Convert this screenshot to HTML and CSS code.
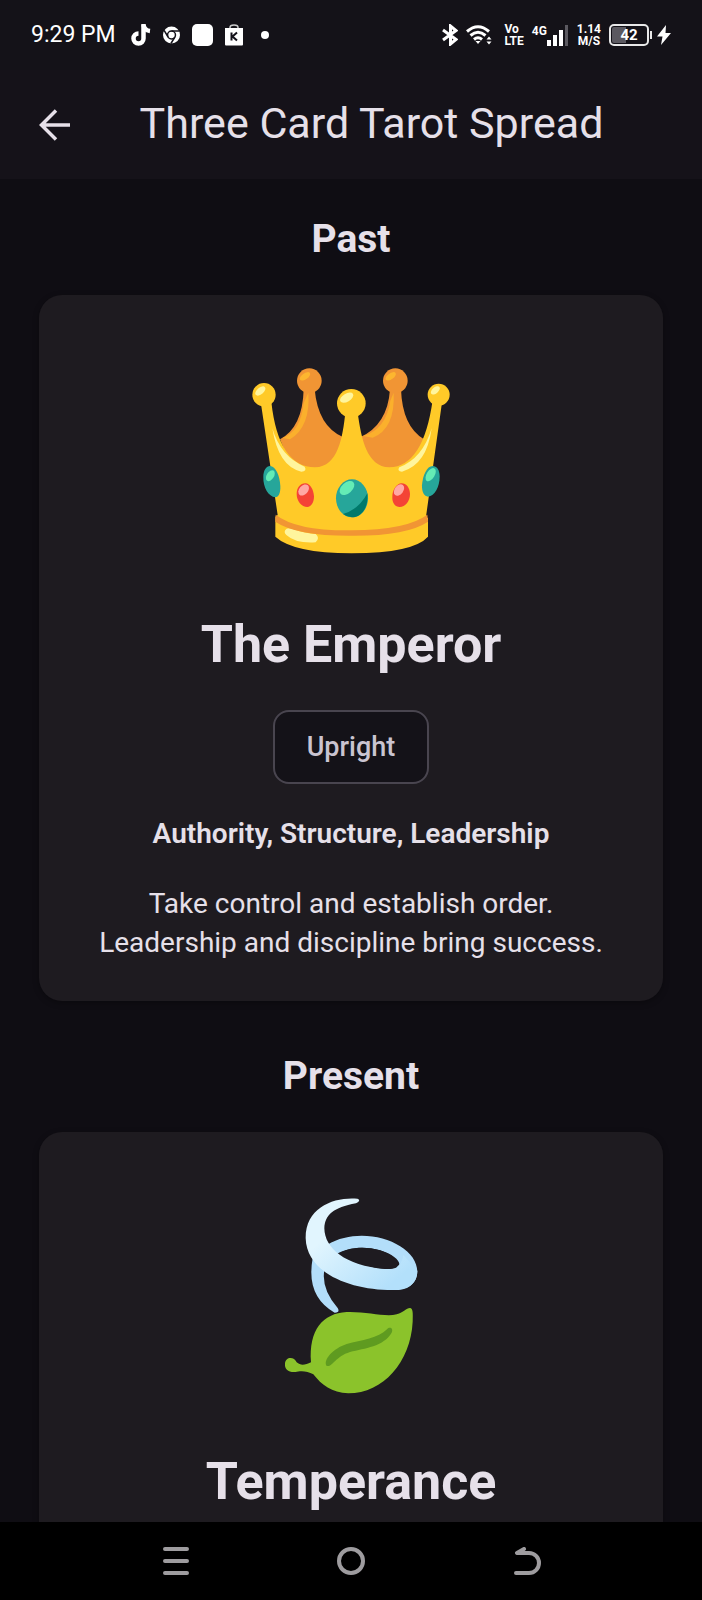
FILE: index.html
```html
<!DOCTYPE html>
<html lang="en">
  <head>
    <meta charset="UTF-8" />
    <meta name="viewport" content="width=device-width, initial-scale=1.0" />
    <title>Three Card Tarot Spread</title>
    <link rel="stylesheet" href="styles.css">
  </head>
  <body>
    <div class="status-bar">
      <div class="status-group status-left">
        <span class="status-time">9:29 PM</span>
        <svg width="20" height="22" viewBox="0 0 20 22" fill="none" stroke="#fff" stroke-width="4.500">
          <path d="M12.5 0v14.5a5 5 0 1 1-5-5"/>
          <path d="M12.5 1c.5 3.500 2.500 5.500 6.500 6"/>
        </svg>
        <svg width="17" height="18" viewBox="0 0 18 18">
          <circle cx="9" cy="9" r="9" fill="#fff"/>
          <circle cx="9" cy="9" r="4.200" fill="#fff" stroke="#14121a" stroke-width="1.600"/>
          <path d="M9 4.800h8.500M5.400 11.100 1.200 4.200M12.600 11.100 8.400 18" stroke="#14121a" stroke-width="1.600"/>
        </svg>
        <svg width="21" height="22" viewBox="0 0 21 22"><rect width="21" height="22" rx="5" fill="#fff"/></svg>
        <svg width="18" height="22" viewBox="0 0 18 22">
          <path d="M5 5V3.500Q5 1 9 1t4 2.500V5" fill="none" stroke="#ccc" stroke-width="1.500"/>
          <path d="M0 4h18v16.500q0 1-1 1H1q-1 0-1-1z" fill="#fff"/>
          <path d="M6.500 8.500v8M12 8.500l-4.500 4 4.500 4" fill="none" stroke="#14121a" stroke-width="2"/>
        </svg>
        <span class="status-dot"></span>
      </div>
      <div class="status-group status-right">
        <svg width="16" height="22" viewBox="0 0 16 22" fill="none" stroke="#fff" stroke-width="3">
          <path d="M1 6l13 9.500-5.500 4.500V2L14 6.500 1 16"/>
        </svg>
        <svg class="wifi" width="26" height="20" viewBox="0 0 26 20" fill="none" stroke="#fff" stroke-width="3">
          <path d="M1 6.500Q12 -3 23 6.500M4.500 10.500Q12 4 19.500 10.500M8 14.500q4-3.500 8 0"/>
          <path d="M9.500 16h5L12 19zM20.500 14.500h5L23 11.500zM20.500 16.500h5L23 19.500z" fill="#fff" stroke="none"/>
        </svg>
        <span class="stacked volte">Vo<br>LTE</span>
        <span class="signal">
          <span class="signal-label">4G</span>
          <svg width="22" height="21" viewBox="0 0 22 21">
            <path d="M0 15h4v6H0zM6 10h4v11H6zM12 5h4v16h-4z" fill="#fff"/>
            <path d="M18 0h3v21h-3z" fill="#5b5960"/>
          </svg>
        </span>
        <span class="stacked speed">1.14<br>M/S</span>
        <span class="battery">42</span>
        <svg width="14" height="20" viewBox="0 0 14 20"><path d="M9 0 0 11.500h5.500L4 20l10-12H8.500z" fill="#fff"/></svg>
      </div>
    </div>

    <header class="app-bar">
      <button class="back-button" aria-label="Back">
        <svg width="32" height="32" viewBox="0 0 32 32" fill="none" stroke="#e6e0e9" stroke-width="3.500">
          <path d="M31 16H3M17 1.500 2.500 16 17 30.500"/>
        </svg>
      </button>
      <h1 class="app-title">Three Card Tarot Spread</h1>
    </header>

    <main class="spread">
      <section class="position">
        <h2 class="position-title">Past</h2>
        <article class="card">
          <svg class="emblem" viewBox="3 -21 720 720">
            <!-- back spikes -->
            <path d="M150 268Q218 232 221 118H254Q264 230 340 262L335 365H190z" fill="#f19534"/>
            <path d="M390 262Q473 225 480 118H513Q517 230 582 268L535 365H400z" fill="#f19534"/>
            <path d="M158 264Q212 244 221 160L235 128Q242 230 180 268zM400 258Q468 238 481 152L491 128Q496 236 428 263z" fill="#fbb02c"/>
            <circle cx="238" cy="92" r="37" fill="#f19534"/>
            <circle cx="496" cy="92" r="37" fill="#f19534"/>
            <ellipse cx="225" cy="79" rx="18" ry="9" fill="#fdb62f" transform="rotate(-35 225 79)"/>
            <ellipse cx="482" cy="79" rx="18" ry="9" fill="#fdb62f" transform="rotate(-35 482 79)"/>
            <!-- body -->
            <path d="M92 155h32Q145 350 255 352C325 350 338 260 346 188H383C394 265 410 350 478 352Q580 350 608 150H637L588 500 594 505V560Q550 609 365 610 190 609 136 560V500L143 495z" fill="#ffca28"/>
            <circle cx="102" cy="134" r="35" fill="#ffca28"/>
            <circle cx="626" cy="134" r="33" fill="#ffca28"/>
            <circle cx="364" cy="160" r="43" fill="#ffca28"/>
            <g fill="#fff59d">
              <ellipse cx="91" cy="123" rx="18" ry="10" transform="rotate(-40 91 123)"/>
              <ellipse cx="616" cy="121" rx="16" ry="9" transform="rotate(-40 616 121)"/>
              <ellipse cx="350" cy="143" rx="22" ry="12" transform="rotate(-30 350 143)"/>
              <path d="M127 235Q152 320 224 350 232 363 214 365 145 350 127 235zM605 235Q578 325 508 352 500 364 516 365 590 345 605 235z"/>
              <path d="M166 540q5-10 25-2 35 13 66 14 14 12 0 25-60 4-88-22-8-7-3-15z"/>
            </g>
            <path d="M137 494Q200 543 365 541 530 540 592 494L594 515Q530 558 365 557 200 558 136 515z" fill="#f19534"/>
            <!-- gems -->
            <path d="M120 348c17 0 30 30 31 60 1 20-5 34-15 34-20-2-37-29-36-61 0-20 9-33 20-33z" fill="#26a69a"/>
            <path d="M608 348c-17 0-30 28-32 58-1 20 7 34 18 34 20-3 35-29 35-60 0-20-9-32-21-32z" fill="#26a69a"/>
            <ellipse cx="366" cy="445" rx="48" ry="57" fill="#26a69a"/>
            <path d="M412 430C416 475 393 502 366 502q-14 0-27-10 48-14 73-62z" fill="#00796b"/>
            <ellipse cx="351" cy="414" rx="26" ry="16" fill="#64ecb5" transform="rotate(-42 351 414)"/>
            <ellipse cx="121" cy="377" rx="18" ry="11" fill="#64ecb5" transform="rotate(-58 121 377)"/>
            <ellipse cx="602" cy="374" rx="22" ry="12" fill="#64ecb5" transform="rotate(-58 602 374)"/>
            <path d="M226 400c15 0 25 20 26 39 0 18-8 32-20 32-17 0-32-17-32-39 0-19 11-32 26-32zM515 400c14 0 25 14 25 32 0 22-14 39-31 39-13 0-23-12-22-30 0-21 13-41 28-41z" fill="#f44336"/>
            <ellipse cx="221" cy="420" rx="19" ry="13" fill="#ffa8a4" transform="rotate(-48 221 420)"/>
            <ellipse cx="507" cy="420" rx="19" ry="13" fill="#ffa8a4" transform="rotate(-52 507 420)"/>
          </svg>
          <h3 class="card-name">The Emperor</h3>
          <span class="orientation">Upright</span>
          <p class="keywords">Authority, Structure, Leadership</p>
          <p class="meaning">Take control and establish order. Leadership and discipline bring success.</p>
        </article>
      </section>

      <section class="position">
        <h2 class="position-title">Present</h2>
        <article class="card">
          <svg class="emblem" viewBox="-117 0 720 720">
            <defs>
              <linearGradient id="wind" x1="0" y1="0" x2="1" y2="1">
                <stop offset="0.300" stop-color="#e1f5fe"/>
                <stop offset="0.850" stop-color="#b3e0fb"/>
              </linearGradient>
            </defs>
            <path d="M172 194C280 130 442 190 442 275 442 310 415 329 370 330L360 267C410 267 389 228 330 211 285 198 235 202 200 222zM128 235Q107 348 194 398 211 398 203 384 151 325 164 265z" fill="#b3defa"/>
            <path d="M262 56C195 50 106 80 107 175 110 285 255 335 385 330 425 327 442 300 442 272L400 225C395 262 372 267 345 267 225 257 164 205 163 145 165 105 190 82 258 70 270 65 270 58 262 56z" fill="url(#wind)"/>
            <path d="M214 217C245 200 290 199 330 211 385 230 403 267 360 267 300 268 245 242 214 217z" fill="#1e1b20"/>
            <path d="M123 547C116 450 158 400 230 396 290 394 345 412 380 403 402 397 409 383 421 384 429 386 429 400 428 425 422 545 340 640 235 640 185 638 155 615 130 583 110 570 86 573 77 576 55 578 43 566 45 551 46 530 72 528 80 547 92 558 106 555 123 547z" fill="#8bc32b"/>
            <path d="M170 558C158 540 190 505 230 492 275 480 325 475 351 448 360 438 371 446 365 458 340 500 285 504 240 516 195 530 188 562 170 558z" fill="#5f9b20"/>
          </svg>
          <h3 class="card-name">Temperance</h3>
        </article>
      </section>
    </main>

    <nav class="nav-bar">
      <button class="nav-button" aria-label="Recent apps">
        <svg width="28" height="28" viewBox="0 0 28 28"><path d="M3 2h22M3 14h22M3 26h22"/></svg>
      </button>
      <button class="nav-button" aria-label="Home">
        <svg width="28" height="28" viewBox="0 0 28 28"><circle cx="14" cy="14" r="12"/></svg>
      </button>
      <button class="nav-button" aria-label="Back">
        <svg width="28" height="28" viewBox="0 0 28 28"><path d="M11 2 4 6h12a10 10 0 0 1 0 20H3"/></svg>
      </button>
    </nav>
  </body>
</html>
```
FILE: styles.css
```css
* {
  box-sizing: border-box;
}
body {
  font-family: Roboto, sans-serif;
  background-color: #0f0d13;
  color: #e6e0e9;
  display: flex;
  flex-direction: column;
  height: 100vh;
  margin: 0;
}
h1,
h2,
h3,
p {
  margin: 0;
}
button {
  background: none;
  border: none;
  padding: 0;
  cursor: pointer;
}
svg {
  display: block;
  flex-shrink: 0;
}

/* status bar */
.status-bar {
  display: flex;
  justify-content: space-between;
  align-items: center;
  flex-shrink: 0;
  height: 70px;
  padding: 0 31px;
  background-color: #141218;
  color: #fff;
}
.status-group {
  display: flex;
  align-items: center;
}
.status-left {
  gap: 12px;
}
.status-right {
  gap: 8px;
}
.status-time {
  margin-right: 3px;
  font-size: 23px;
  line-height: 28px;
}
.status-dot {
  width: 8px;
  height: 8px;
  margin-left: 6px;
  border-radius: 50%;
  background-color: #fff;
}
.stacked {
  font-size: 12px;
  font-weight: 700;
  line-height: 12px;
}
.volte {
  margin-left: 4px;
}
.speed {
  text-align: center;
}
.signal {
  display: flex;
  align-items: flex-start;
}
.signal-label {
  font-size: 12px;
  font-weight: 700;
  line-height: 12px;
}
.battery {
  position: relative;
  width: 40px;
  height: 22px;
  border: 2px solid #e8e8e8;
  border-radius: 5px;
  background: linear-gradient(to right, #5b5960 42%, transparent 42%) content-box;
  padding: 1px;
  font-size: 15px;
  font-weight: 700;
  line-height: 16px;
  text-align: center;
}
.battery::after {
  content: "";
  position: absolute;
  top: 5px;
  right: -5px;
  width: 2px;
  height: 8px;
  background-color: #e8e8e8;
}

/* app bar */
.app-bar {
  display: flex;
  align-items: center;
  flex-shrink: 0;
  height: 109px;
  padding: 0 39px;
  background-color: #151219;
}
.back-button {
  width: 32px;
}
.app-title {
  flex: 1;
  margin-right: 32px;
  padding: 0 0 3px 41px;
  font-size: 43px;
  font-weight: 400;
  line-height: 56px;
  text-align: center;
}

/* spread */
.spread {
  flex: 1;
  min-height: 0;
  overflow-y: auto;
  scrollbar-width: none;
  padding: 32px 39px;
}
.position {
  margin-bottom: 47px;
}
.position-title {
  margin-bottom: 28px;
  font-size: 39px;
  font-weight: 700;
  line-height: 56px;
  text-align: center;
}
.card {
  display: flex;
  flex-direction: column;
  align-items: center;
  padding: 48px 48px 39px;
  border-radius: 23px;
  background-color: #1e1b20;
  box-shadow: 0 2px 6px rgba(0, 0, 0, 0.3);
  text-align: center;
}
.emblem {
  width: 240px;
  height: 240px;
  margin-bottom: 30px;
}
.card-name {
  margin-bottom: 33px;
  font-size: 52px;
  font-weight: 700;
  line-height: 64px;
}
.orientation {
  margin-bottom: 30px;
  padding: 15px 32px;
  border: 2px solid #49454f;
  border-radius: 16px;
  background-color: #141218;
  color: #cac4d0;
  font-size: 27px;
  font-weight: 500;
  line-height: 40px;
}
.keywords {
  margin-bottom: 30px;
  font-size: 28px;
  font-weight: 600;
  line-height: 40px;
}
.meaning {
  font-size: 28px;
  line-height: 39px;
}

/* system navigation */
.nav-bar {
  display: flex;
  flex-shrink: 0;
  height: 78px;
  padding: 0 12.5%;
  background-color: #000;
}
.nav-button {
  flex: 1;
  display: flex;
  justify-content: center;
  align-items: center;
}
.nav-button svg {
  fill: none;
  stroke: #9e9c9f;
  stroke-width: 4;
  stroke-linecap: round;
  stroke-linejoin: round;
}
```
